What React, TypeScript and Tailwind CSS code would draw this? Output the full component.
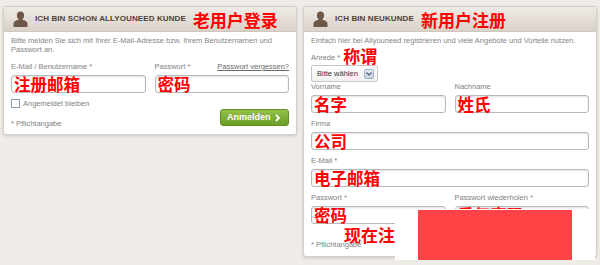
import type { ReactNode } from 'react'

const cjk = "font-['Noto_Sans_CJK_SC',sans-serif] font-bold text-[#ff0000]"

function PersonIcon() {
  return (
    <svg width="15" height="16" viewBox="0 0 15 16" aria-hidden className="shrink-0">
      <path
        d="M7.5 0.5c2.2 0 3.6 1.6 3.6 3.9 0 1.6-.7 3-1.7 3.8v.6c2.5.5 4.8 1.6 5.1 3.3V16H0.5v-3.9c.3-1.7 2.6-2.8 5.1-3.3v-.6c-1-.8-1.7-2.2-1.7-3.8 0-2.3 1.4-3.9 3.6-3.9z"
        fill="#6e5747"
      />
    </svg>
  )
}

function CardHeader({ title, cn }: { title: string; cn: string }) {
  return (
    <div className="flex h-[25px] items-center gap-[7px] border-b border-[#cfc6bc] bg-gradient-to-b from-[#efebe6] to-[#dad2c9] pl-[9px]">
      <PersonIcon />
      <span className="text-[8px] font-bold uppercase tracking-[0.1px] text-[#4e4239]">
        {title}
      </span>
      <span className={`${cjk} text-[17px] leading-none`}>{cn}</span>
    </div>
  )
}

function Label({ children }: { children: ReactNode }) {
  return <div className="h-[12px] text-[7.5px] leading-[12px] text-[#828282]">{children}</div>
}

function Field({ text }: { text?: string }) {
  return (
    <div className="mt-[2px] flex h-[18px] items-end rounded-[3px] border border-[#b9b9b9] bg-white pl-[2px] shadow-[inset_0_1px_2px_rgba(0,0,0,0.12)]">
      {text ? <span className={`${cjk} text-[16.5px] leading-[16px]`}>{text}</span> : null}
    </div>
  )
}

function Card({ children, className }: { children: ReactNode; className?: string }) {
  return (
    <div
      className={`w-[294px] shrink-0 rounded-[3px] border border-[#d6cfc7] bg-white shadow-[0_1px_3px_rgba(0,0,0,0.15)] ${className ?? ''}`}
    >
      {children}
    </div>
  )
}

export default function App() {
  return (
    <div className="relative h-[265px] w-[600px] overflow-hidden bg-[#efebe7] font-['Liberation_Sans',Arial,sans-serif]">
      <div className="flex items-start gap-[6px] pl-[3px] pt-[6px]">
        <Card className="h-[129px]">
          <CardHeader title="Ich bin schon Allyouneed Kunde" cn="老用户登录" />
          <div className="px-[7px] pt-[4px]">
            <p className="text-[7.5px] leading-[9px] text-[#858585]">
              Bitte melden Sie sich mit Ihrer E-Mail-Adresse bzw. Ihrem Benutzernamen und Passwort an.
            </p>
            <div className="mt-[7px] grid grid-cols-2 gap-x-[9px]">
              <div>
                <Label>E-Mail / Benutzername *</Label>
                <Field text="注册邮箱" />
              </div>
              <div>
                <div className="flex justify-between">
                  <Label>Passwort *</Label>
                  <a className="h-[12px] text-[7.5px] leading-[12px] text-[#6a6a6a] underline">
                    Passwort vergessen?
                  </a>
                </div>
                <Field text="密码" />
              </div>
            </div>
            <div className="mt-[5px] flex h-[11px] items-center gap-[3px]">
              <span className="size-[9px] border border-[#8b9db3] bg-white" />
              <span className="text-[7.5px] text-[#828282]">Angemeldet bleiben</span>
            </div>
            <div className="flex items-start justify-between">
              <span className="mt-[9px] text-[7.5px] leading-[11px] text-[#828282]">* Pflichtangabe</span>
              <div className="flex h-[17px] w-[69px] shrink-0 items-center justify-between rounded-[3px] border border-[#62901f] bg-gradient-to-b from-[#93c24a] to-[#6b9c24] pl-[6px] pr-[7px] text-[9px] font-bold text-white">
                <span>Anmelden</span>
                <svg width="6" height="8" viewBox="0 0 6 8" aria-hidden>
                  <path d="M1 1l3 3-3 3" stroke="white" strokeWidth="1.8" fill="none" />
                </svg>
              </div>
            </div>
          </div>
        </Card>

        <Card className="h-[251px]">
          <CardHeader title="Ich bin Neukunde" cn="新用户注册" />
          <div className="px-[7px] pt-[4px]">
            <p className="text-[7.5px] leading-[10px] text-[#858585]">
              Einfach hier bei Allyouneed registrieren und viele Angebote und Vorteile nutzen.
            </p>
            <div className="mt-[1px] flex h-[17px] items-end gap-[3px]">
              <span className="mb-[1px] text-[7.5px] text-[#828282]">Anrede *</span>
              <span className={`${cjk} text-[17px] leading-none`}>称谓</span>
            </div>
            <div className="mt-[1px] flex h-[17px] w-[67px] items-center justify-between rounded-[2px] border border-[#c8c8c8] bg-gradient-to-b from-white to-[#f1f1f1] pl-[5px] pr-[3px]">
              <span className="text-[7.5px] text-[#333]">Bitte wählen</span>
              <span className="flex size-[10px] items-center justify-center rounded-[2px] border border-[#9eb0c8] bg-gradient-to-b from-[#e6edf7] to-[#c4d2e6]">
                <svg width="6" height="4" viewBox="0 0 6 4" aria-hidden>
                  <path d="M0.5 0.5l2.5 2.5 2.5-2.5" stroke="#4a5d7a" strokeWidth="1.2" fill="none" />
                </svg>
              </span>
            </div>
            <div className="-mt-[1px] grid grid-cols-2 gap-x-[9px]">
              <div>
                <Label>Vorname</Label>
                <Field text="名字" />
              </div>
              <div>
                <Label>Nachname</Label>
                <Field text="姓氏" />
              </div>
            </div>
            <div className="mt-[5px]">
              <Label>Firma</Label>
              <Field text="公司" />
            </div>
            <div className="mt-[5px]">
              <Label>E-Mail *</Label>
              <Field text="电子邮箱" />
            </div>
            <div className="mt-[5px] grid grid-cols-2 gap-x-[9px]">
              <div>
                <Label>Passwort *</Label>
                <Field text="密码" />
              </div>
              <div>
                <Label>Passwort wiederholen *</Label>
                <Field text="重复密码" />
              </div>
            </div>
            <div className="relative h-[22px]">
              <span className={`${cjk} absolute left-[33px] top-[2px] text-[17px] leading-none`}>
                现在注册
              </span>
              <span className="absolute left-0 top-[15px] text-[7.5px] text-[#828282]">* Pflichtangabe</span>
            </div>
          </div>
        </Card>
      </div>

      <div className="absolute left-[395px] top-[209px] h-[51px] w-[200px] bg-white" />
      <div className="absolute left-[418px] top-[210px] h-[50px] w-[154px] bg-[#ff4347]" />
    </div>
  )
}
